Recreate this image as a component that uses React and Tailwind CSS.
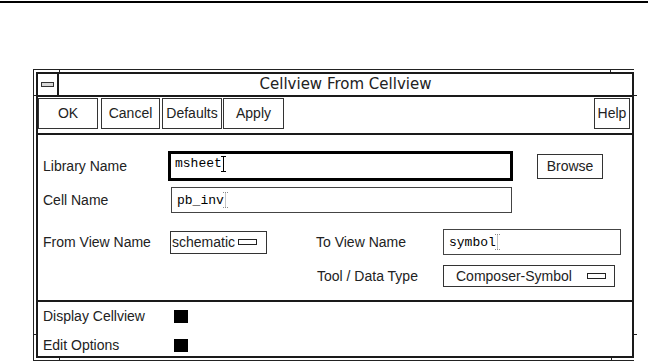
import React from "react";

// Motif-style dialog: "Cellview From Cellview"
const sans = "font-['Liberation_Sans',Arial,sans-serif]";
const mono = "font-['Liberation_Mono','Courier_New',monospace]";

const CycleIcon = () => (
  <span className="inline-block w-[19px] h-[6px] border border-[#222] bg-white" />
);

const IBeam = ({ dim }) => (
  <svg width="7" height="16" viewBox="0 0 7 16" className="shrink-0">
    <path
      d="M1 0.5h5M3.5 0.5v15M1 15.5h5"
      stroke={dim ? "#8a8a8a" : "#000"}
      strokeWidth="1"
      strokeDasharray={dim ? "1 1" : undefined}
      fill="none"
    />
  </svg>
);

const Btn = ({ children, className = "" }) => (
  <div
    className={`h-[31px] flex items-center justify-center border border-[#333] text-[14px] text-[#222] ${className}`}
  >
    {children}
  </div>
);

const TextField = ({ value, className = "", dim }) => (
  <div className={`flex items-center bg-white ${className}`}>
    <span className={`${mono} text-[13px] text-black leading-none`}>{value}</span>
    <span className="-ml-[2px]">
      <IBeam dim={dim} />
    </span>
  </div>
);

export default function App() {
  return (
    <div className={`w-[648px] h-[363px] bg-white overflow-hidden ${sans} text-[#222]`}>
      <div className="mt-[1px] h-[2px] bg-black" />

      {/* window frame */}
      <div className="relative mt-[66px] ml-[33px] w-[601px] border-l border-t border-b border-[#222] pt-[2px] pl-[2px] pb-[2px]">
        {/* resize handle marks */}
        <span className="absolute left-[25px] top-0 w-[1px] h-[2px] bg-[#222]" />
        <span className="absolute left-[576px] top-0 w-[1px] h-[2px] bg-[#222]" />
        <span className="absolute left-[25px] bottom-0 w-[1px] h-[2px] bg-[#222]" />
        <span className="absolute left-[577px] bottom-0 w-[1px] h-[2px] bg-[#222]" />
        <span className="absolute left-0 top-[25px] w-[2px] h-[1px] bg-[#222]" />
        <span className="absolute left-0 top-[264px] w-[2px] h-[1px] bg-[#222]" />
        <span className="absolute -right-[3px] top-[25px] w-[3px] h-[1px] bg-[#222]" />
        <span className="absolute -right-[3px] top-[264px] w-[3px] h-[1px] bg-[#222]" />

        <div className="w-[598px] border-2 border-[#1a1a1a] bg-white">
          {/* title bar */}
          <div className="flex h-[23px] border-b-2 border-[#1a1a1a]">
            <div className="w-[21px] border-r-2 border-[#1a1a1a] flex items-center justify-center">
              <span className="block w-[13px] h-[5px] border border-[#333] bg-[#d8d8d8]" />
            </div>
            <div className="flex-1 flex items-center justify-center font-['DejaVu_Sans',sans-serif] text-[15px] text-[#222] leading-none">
              Cellview From Cellview
            </div>
          </div>

          {/* button row */}
          <div className="flex items-start h-[38px] pt-[1px] border-b-2 border-[#1a1a1a]">
            <Btn className="w-[60px]">OK</Btn>
            <Btn className="w-[59px] ml-[3px]">Cancel</Btn>
            <Btn className="w-[60px] ml-[2px]">Defaults</Btn>
            <Btn className="w-[61px] ml-[1px]">Apply</Btn>
            <div className="flex-1" />
            <Btn className="w-[36px] mr-[2px]">Help</Btn>
          </div>

          {/* form */}
          <div className="flex flex-col h-[167px] pl-[5px] text-[14px] text-[#222] border-b-2 border-[#1a1a1a]">
            <div className="flex items-center h-[30px] mt-[16px]">
              <div className="w-[125px]">Library Name</div>
              <TextField
                value="msheet"
                className="w-[345px] h-[30px] border-[3px] border-black pl-[4px] pb-[5px]"
              />
              <div className="ml-[24px] w-[66px] h-[25px] border border-[#333] flex items-center justify-center">
                Browse
              </div>
            </div>

            <div className="flex items-center h-[26px] mt-[6px]">
              <div className="w-[128px]">Cell Name</div>
              <TextField
                value="pb_inv"
                dim
                className="w-[341px] h-[26px] border border-[#444] pl-[5px]"
              />
            </div>

            <div className="flex items-center h-[26px] mt-[16px]">
              <div className="w-[127px]">From View Name</div>
              <div className="w-[97px] h-[23px] border border-[#333] flex items-center justify-between pl-[1px] pr-[9px]">
                <span>schematic</span>
                <CycleIcon />
              </div>
              <div className="ml-[49px] w-[127px]">To View Name</div>
              <TextField
                value="symbol"
                dim
                className="w-[178px] h-[26px] border border-[#444] pl-[5px]"
              />
            </div>

            <div className="flex items-center h-[22px] mt-[10px]">
              <div className="w-[274px]" />
              <div className="w-[126px]">Tool / Data Type</div>
              <div className="w-[172px] h-[22px] border border-[#333] flex items-center justify-between pl-[12px] pr-[8px]">
                <span>Composer-Symbol</span>
                <CycleIcon />
              </div>
            </div>
          </div>

          {/* options */}
          <div className="flex flex-col h-[54px] pl-[5px] text-[14px] text-[#222]">
            <div className="flex items-center h-[22px] mt-[4px]">
              <div className="w-[131px]">Display Cellview</div>
              <span className="block w-[14px] h-[13px] bg-black" />
            </div>
            <div className="flex items-center h-[22px] mt-[7px]">
              <div className="w-[131px]">Edit Options</div>
              <span className="block w-[14px] h-[13px] bg-black" />
            </div>
          </div>
        </div>
      </div>
    </div>
  );
}
